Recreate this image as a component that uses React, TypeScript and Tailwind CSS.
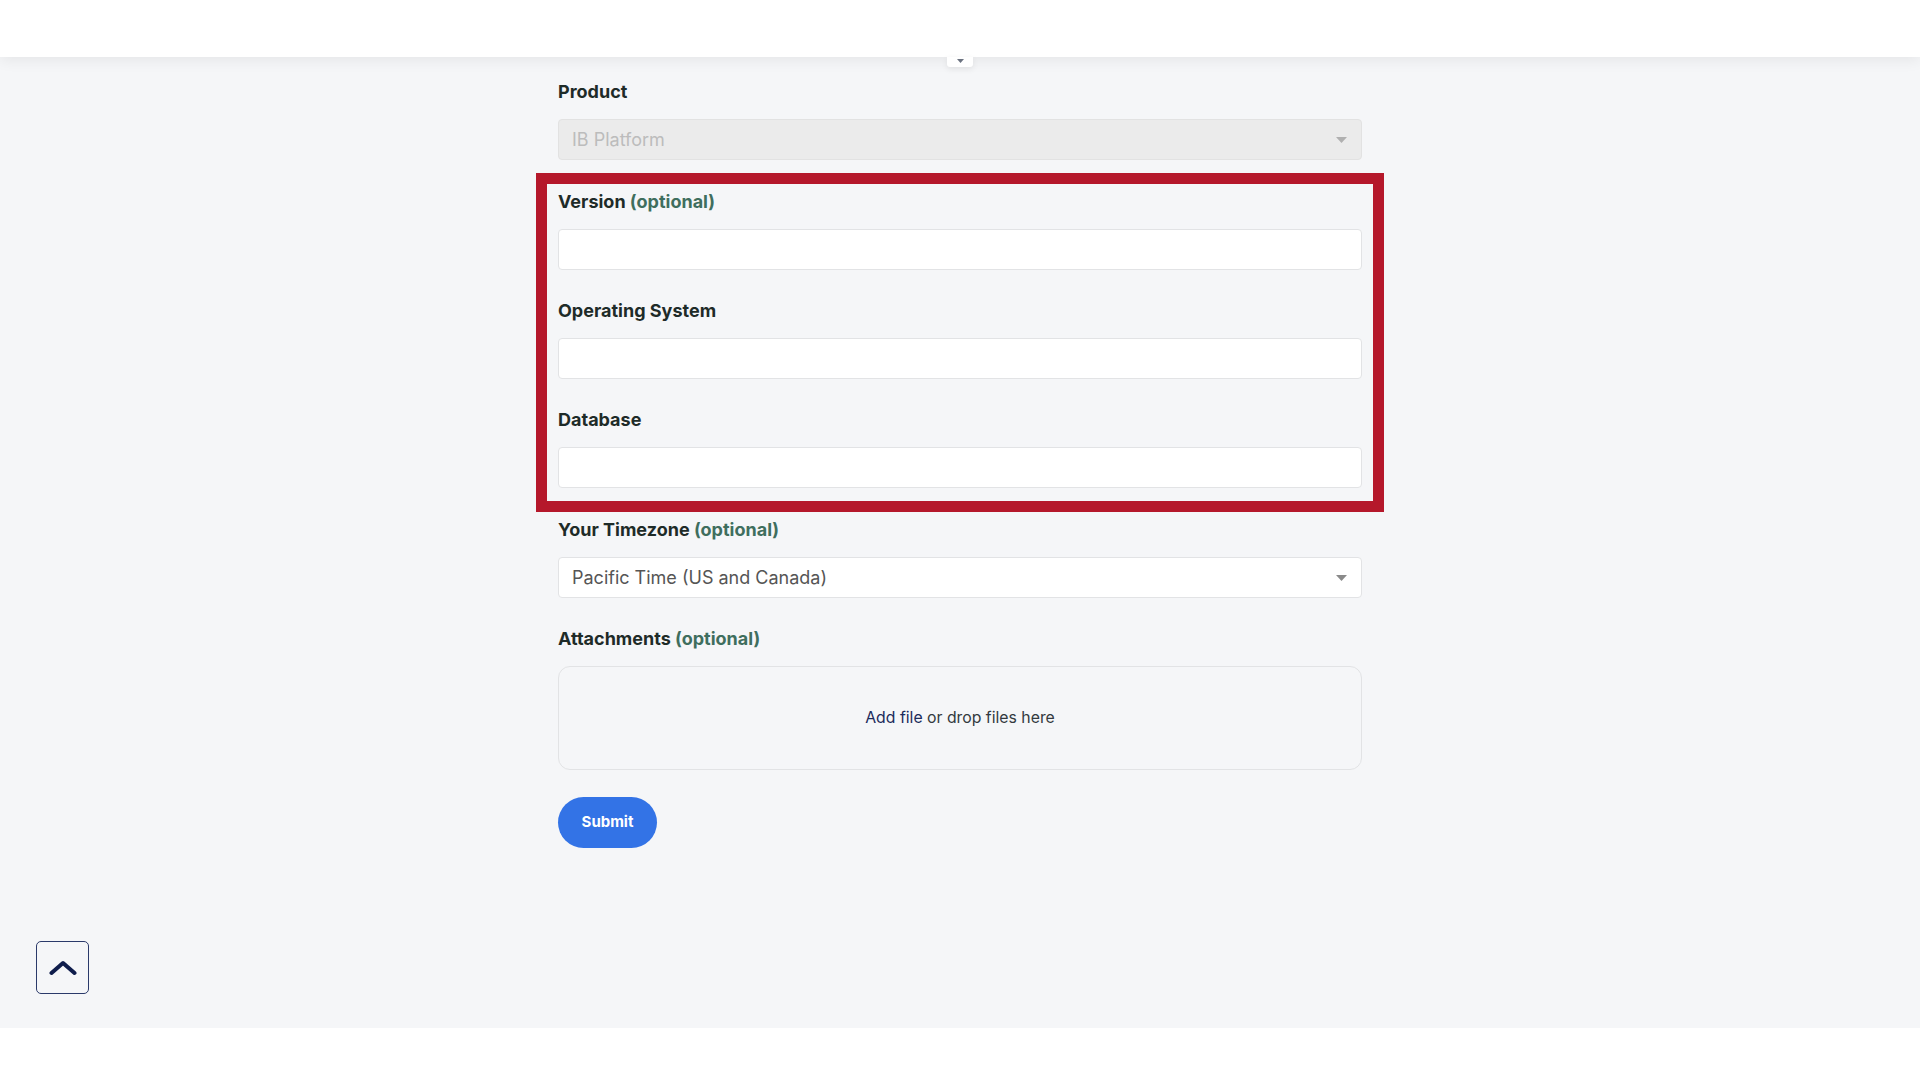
import React from 'react';

const font = { fontFamily: 'Inter, "Noto Sans", sans-serif' };

function Caret({ className }: { className?: string }) {
  return (
    <svg className={className} width="11" height="6" viewBox="0 0 11 6">
      <path d="M0 0 L11 0 L5.5 6 Z" fill="currentColor" />
    </svg>
  );
}

function Label({ text, optional }: { text: string; optional?: boolean }) {
  return (
    <div className="mb-[16px] text-[18px] leading-[22px] font-bold text-[#1e2b28]">
      {text}
      {optional && <span className="text-[#3f6e5e]"> (optional)</span>}
    </div>
  );
}

function TextInput() {
  return <div className="h-[41px] w-full rounded-[4px] border border-[#e2e3e5] bg-white" />;
}

export default function App() {
  return (
    <div className="min-h-[1080px] bg-white" style={font}>
      <div className="relative z-10 h-[57px] bg-white shadow-[0_3px_14px_rgba(0,0,0,0.07)]" />
      <div className="relative h-[971px] bg-[#f5f6f8]">
        <div className="absolute left-[947px] top-0 z-20 flex h-[10px] w-[26px] items-start justify-center rounded-b-[3px] bg-white shadow-[0_2px_6px_rgba(0,0,0,0.08)]">
          <Caret className="mt-[2px] h-[4px] w-[7px] text-[#6b7280]" />
        </div>

        <div className="mx-auto w-[804px] pt-[24px]">
          <Label text="Product" />
          <div className="flex h-[41px] items-center justify-between rounded-[4px] border border-[#e2e2e2] bg-[#ebebeb] pl-[13px] pr-[14px]">
            <span className="text-[18px] text-[#bcbcbc]">IB Platform</span>
            <Caret className="text-[#b0b0b0]" />
          </div>

          <div className="mx-[-22px] mt-[13px] border-[11px] border-[#b5182b] px-[11px] pb-[13px] pt-[7px]">
            <Label text="Version" optional />
            <TextInput />
            <div className="mt-[30px]">
              <Label text="Operating System" />
              <TextInput />
            </div>
            <div className="mt-[30px]">
              <Label text="Database" />
              <TextInput />
            </div>
          </div>

          <div className="mt-[7px]">
            <Label text="Your Timezone" optional />
            <div className="flex h-[41px] items-center justify-between rounded-[4px] border border-[#e2e3e5] bg-white pl-[13px] pr-[14px]">
              <span className="text-[18px] text-[#555555]">Pacific Time (US and Canada)</span>
              <Caret className="text-[#8a8a8a]" />
            </div>
          </div>

          <div className="mt-[30px]">
            <Label text="Attachments" optional />
            <div className="flex h-[104px] items-center justify-center rounded-[12px] border border-[#e2e3e5] text-[15.8px] text-[#333a3f]">
              <span>
                <span className="text-[#1c2b5c]">Add file</span> or drop files here
              </span>
            </div>
          </div>

          <button className="mt-[27px] h-[51px] w-[99px] rounded-full bg-[#3373e6] text-[15px] font-bold text-white">
            Submit
          </button>
        </div>

        <button className="absolute left-[36px] top-[884px] flex h-[53px] w-[53px] items-center justify-center rounded-[5px] border-[1.5px] border-[#2b3a6a]">
          <svg width="28" height="16" viewBox="0 0 28 16">
            <path d="M2.5 13 L14 3 L25.5 13" fill="none" stroke="#0f1d4c" strokeWidth="4" strokeLinecap="round" strokeLinejoin="round" />
          </svg>
        </button>
      </div>
    </div>
  );
}
